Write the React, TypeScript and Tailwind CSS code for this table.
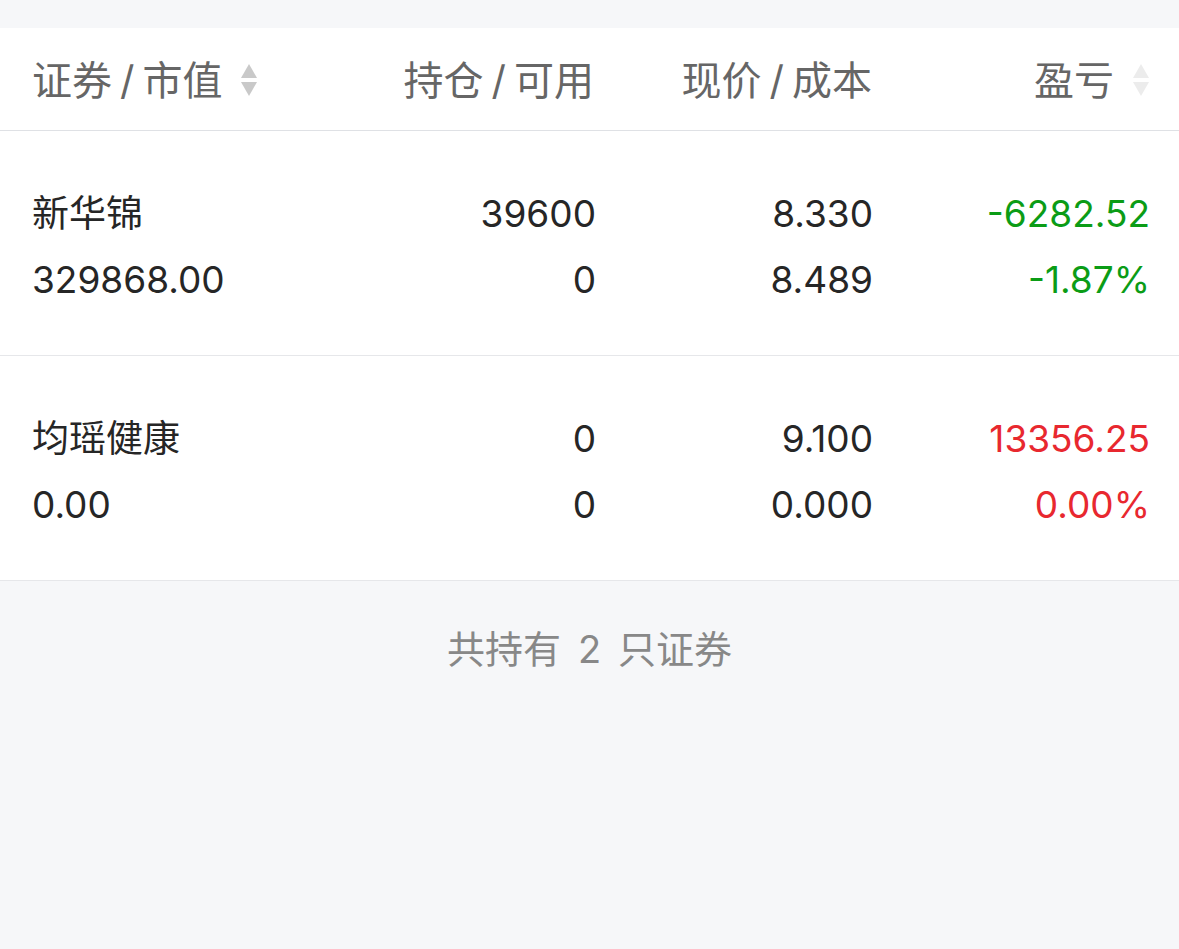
const ROWS = [
  { name: "新华锦", value: "329868.00", hold: "39600", avail: "0", price: "8.330", cost: "8.489", pnl: "-6282.52", pct: "-1.87%", up: false },
  { name: "均瑶健康", value: "0.00", hold: "0", avail: "0", price: "9.100", cost: "0.000", pnl: "13356.25", pct: "0.00%", up: true },
];

function SortIcon({ light }: { light?: boolean }) {
  const c = light ? "#ececec" : "#c9c9c9";
  return (
    <svg width="18" height="36" viewBox="0 0 18 36" aria-hidden>
      <path d="M9 1 L17 15 L1 15 Z" fill={c} />
      <path d="M1 19 L17 19 L9 33 Z" fill={c} />
    </svg>
  );
}

// header label like 证券/市值 — the slash sits a little apart
function Label({ a, b }: { a: string; b?: string }) {
  return (
    <span>
      {a}
      {b && (
        <>
          <span className="mx-[8px]">/</span>
          {b}
        </>
      )}
    </span>
  );
}

const GRID = "grid grid-cols-[287px_277px_277px_277px] px-[32px]";

export default function App() {
  return (
    <div
      className="min-h-[949px] w-[1179px] bg-[#f6f7f9] pt-[28px]"
      style={{ fontFamily: 'Inter, "Noto Sans CJK SC", sans-serif' }}
    >
      {/* header */}
      <div className={`${GRID} h-[103px] items-center border-b border-[#dfe1e5] bg-white pt-[3px] text-[40px] text-[#666]`}>
        <div className="flex items-center gap-[18px]">
          <Label a="证券" b="市值" />
          <SortIcon />
        </div>
        <div className="pr-[2px] text-right">
          <Label a="持仓" b="可用" />
        </div>
        <div className="pr-[1px] text-right">
          <Label a="现价" b="成本" />
        </div>
        <div className="flex items-center justify-end gap-[18px]">
          <Label a="盈亏" />
          <SortIcon light />
        </div>
      </div>

      {/* rows */}
      {ROWS.map((r) => {
        const tone = r.up ? "text-[#e8282f]" : "text-[#0b9c16]";
        return (
          <div key={r.name} className={`${GRID} h-[225px] content-center gap-y-[26px] border-b border-[#e6e7ea] bg-white pt-[8px] text-[37px] leading-[40px] text-[#262626]`}>
            <div>{r.name}</div>
            <div className="text-right">{r.hold}</div>
            <div className="text-right">{r.price}</div>
            <div className={`text-right ${tone}`}>{r.pnl}</div>
            <div>{r.value}</div>
            <div className="text-right">{r.avail}</div>
            <div className="text-right">{r.cost}</div>
            <div className={`text-right ${tone}`}>{r.pct}</div>
          </div>
        );
      })}

      <div className="pt-[40px] text-center text-[38px] text-[#888]">
        共持有<span className="mx-[17px]">2</span>只证券
      </div>
    </div>
  );
}
